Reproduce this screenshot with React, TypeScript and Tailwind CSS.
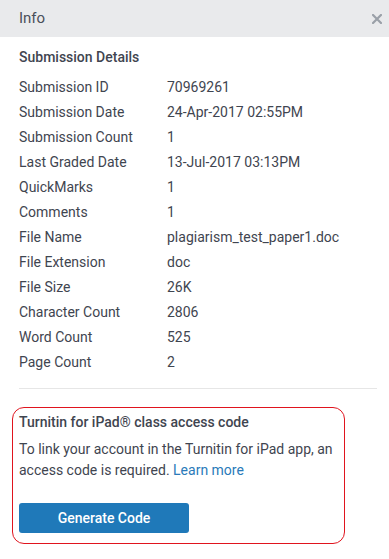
const details: [string, string][] = [
  ["Submission ID", "70969261"],
  ["Submission Date", "24-Apr-2017 02:55PM"],
  ["Submission Count", "1"],
  ["Last Graded Date", "13-Jul-2017 03:13PM"],
  ["QuickMarks", "1"],
  ["Comments", "1"],
  ["File Name", "plagiarism_test_paper1.doc"],
  ["File Extension", "doc"],
  ["File Size", "26K"],
  ["Character Count", "2806"],
  ["Word Count", "525"],
  ["Page Count", "2"],
];

export default function App() {
  return (
    <div className="h-[559px] w-[389px] bg-white font-['Roboto',sans-serif] text-[14px] text-[#3f4550]">
      <div className="flex h-[37px] items-center justify-between bg-[#e9eaec] pl-[19px] pr-[7px]">
        <span className="text-[15px] text-[#4a505a]">Info</span>
        <svg width="10" height="10" viewBox="0 0 10 10">
          <path d="M1 1 L9 9 M9 1 L1 9" stroke="#9aa0a8" strokeWidth="2.2" strokeLinecap="square" />
        </svg>
      </div>

      <div className="pl-[19px] pr-[12px]">
        <h3 className="mt-[10px] leading-[20px] font-medium">Submission Details</h3>
        <div className="mt-[7.5px]">
          {details.map(([label, value]) => (
            <div key={label} className="flex h-[25px] items-center">
              <span className="w-[148px] shrink-0">{label}</span>
              <span>{value}</span>
            </div>
          ))}
        </div>
        <div className="mt-[13px] h-px bg-[#e6e6e6]" />
      </div>

      <div className="mt-[18px] ml-[12px] w-[333px] rounded-[12px] border border-[#e0141e] pt-[4px] pr-[6px] pb-[10px] pl-[6px]">
        <h4 className="leading-[20px] font-medium">Turnitin for iPad® class access code</h4>
        <p className="mt-[7.5px] leading-[21px]">
          To link your account in the Turnitin for iPad app, an access code is required.{" "}
          <a className="text-[#2a7ab9]">Learn more</a>
        </p>
        <button className="mt-[22px] h-[30px] w-[170px] rounded-[3px] bg-[#1f79b9] text-[14px] font-medium text-white">
          Generate Code
        </button>
      </div>
    </div>
  );
}
